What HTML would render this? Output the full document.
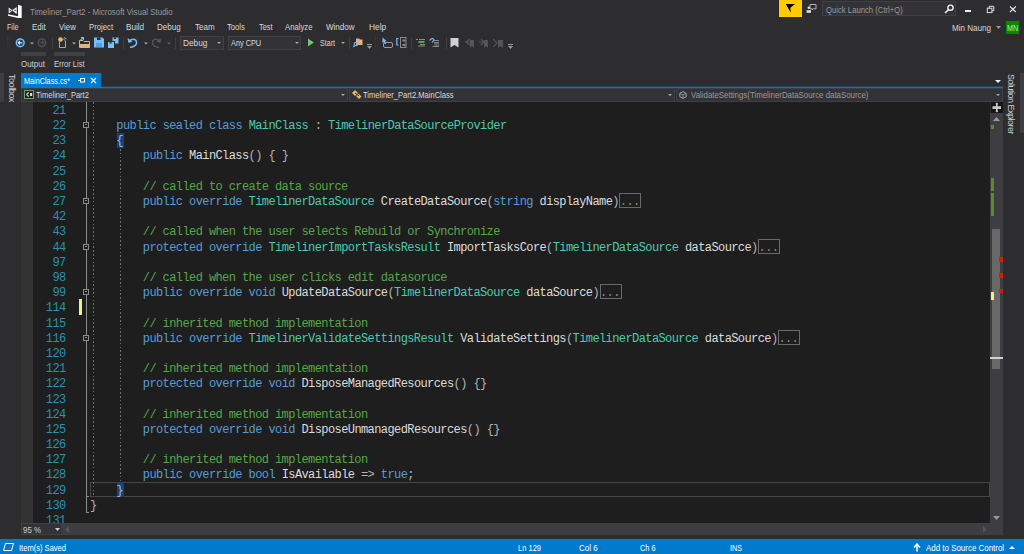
<!DOCTYPE html><html><head><meta charset='utf-8'><style>
html,body{margin:0;padding:0;}
body{width:1024px;height:554px;overflow:hidden;background:#2d2d30;position:relative;font-family:"Liberation Sans",sans-serif;}
.t{position:absolute;white-space:pre;font-family:"Liberation Sans",sans-serif;}
.c{position:absolute;white-space:pre;font-family:"Liberation Mono",monospace;font-size:12px;line-height:12px;letter-spacing:-0.59px;color:#dcdcdc;}
.k{color:#569cd6} .ty{color:#4ec9b0} .cm{color:#57a64a} .p{color:#b4b4b4}
</style></head><body>
<svg style='position:absolute;left:4px;top:2px;' width='22' height='18' viewBox='0 0 22 18'><path d='M4 12.3 L14 14.2 L14 2.8 L17.7 4 L17.7 16 L14 16 L4 13.7 Z' fill='#fff'/><path d='M4.7 5.4 L8.3 8.3 L12.7 4.9 L12.7 11.9 L8.3 8.5 L4.7 11.4 Z' fill='#fff'/><path d='M10 8.4 L11.6 7.2 L11.6 9.6 Z' fill='#2d2d30'/><path d='M5.7 7.2 L7.2 8.4 L5.7 9.6 Z' fill='#2d2d30'/></svg>
<div class='t' style='left:29.60px;top:8px;font-size:9px;line-height:9px;transform:scaleX(0.8778);transform-origin:0 0;color:#999999;'>Timeliner_Part2 - Microsoft Visual Studio</div>
<div style='position:absolute;left:779px;top:0px;width:23px;height:17px;background:#ffcc00;'></div>
<svg style='position:absolute;left:785px;top:3px;' width='12' height='11' viewBox='0 0 12 11'><path d='M0.8 1 L10 1 L5.3 4.8 L5.8 9.8 Z' fill='#000'/></svg>
<svg style='position:absolute;left:805px;top:3px;' width='12' height='11' viewBox='0 0 12 11'><path d='M5 1.5 H11 V5.8 H8.2 L7.2 6.8 V5.8 H5 Z' fill='none' stroke='#c0c0c0' stroke-width='0.9'/><circle cx='3.8' cy='4.8' r='1.3' fill='#e0e0e0'/><rect x='1.6' y='7.2' width='4.4' height='2.6' fill='#e0e0e0'/></svg>
<div style='position:absolute;left:822px;top:1px;width:134px;height:15px;background:#333337;box-sizing:border-box;border:1px solid #3f3f46;'></div>
<div class='t' style='left:826.00px;top:6px;font-size:9px;line-height:9px;transform:scaleX(0.8565);transform-origin:0 0;color:#999999;'>Quick Launch (Ctrl+Q)</div>
<svg style='position:absolute;left:944px;top:4px;' width='11' height='10' viewBox='0 0 11 10'><circle cx='6.5' cy='3.7' r='2.6' fill='none' stroke='#f1f1f1' stroke-width='1.4'/><path d='M4.6 5.6 L1 9' stroke='#f1f1f1' stroke-width='1.6'/></svg>
<div style='position:absolute;left:965px;top:10px;width:6px;height:2px;background:#f1f1f1;'></div>
<svg style='position:absolute;left:986px;top:5px;' width='10' height='10' viewBox='0 0 10 10'><rect x='1.3' y='3.2' width='4.6' height='4.4' fill='none' stroke='#e0e0e0' stroke-width='1'/><path d='M3.2 3.2 V1.3 H7.8 V5.7 H5.9' fill='none' stroke='#e0e0e0' stroke-width='1'/></svg>
<svg style='position:absolute;left:1009px;top:5px;' width='9' height='9' viewBox='0 0 9 9'><path d='M1 1.5 L6.8 7 M6.8 1.5 L1 7' stroke='#e8e8e8' stroke-width='1.1'/></svg>
<div class='t' style='left:7.00px;top:23px;font-size:9px;line-height:9px;transform:scaleX(0.7933);transform-origin:0 0;color:#dadada;'>File</div>
<div class='t' style='left:32.00px;top:23px;font-size:9px;line-height:9px;transform:scaleX(0.8746);transform-origin:0 0;color:#dadada;'>Edit</div>
<div class='t' style='left:58.60px;top:23px;font-size:9px;line-height:9px;transform:scaleX(0.8667);transform-origin:0 0;color:#dadada;'>View</div>
<div class='t' style='left:88.50px;top:23px;font-size:9px;line-height:9px;transform:scaleX(0.8593);transform-origin:0 0;color:#dadada;'>Project</div>
<div class='t' style='left:126.00px;top:23px;font-size:9px;line-height:9px;transform:scaleX(0.8997);transform-origin:0 0;color:#dadada;'>Build</div>
<div class='t' style='left:157.40px;top:23px;font-size:9px;line-height:9px;transform:scaleX(0.8900);transform-origin:0 0;color:#dadada;'>Debug</div>
<div class='t' style='left:194.60px;top:23px;font-size:9px;line-height:9px;transform:scaleX(0.8879);transform-origin:0 0;color:#dadada;'>Team</div>
<div class='t' style='left:226.80px;top:23px;font-size:9px;line-height:9px;transform:scaleX(0.8508);transform-origin:0 0;color:#dadada;'>Tools</div>
<div class='t' style='left:258.80px;top:23px;font-size:9px;line-height:9px;transform:scaleX(0.8233);transform-origin:0 0;color:#dadada;'>Test</div>
<div class='t' style='left:285.30px;top:23px;font-size:9px;line-height:9px;transform:scaleX(0.8590);transform-origin:0 0;color:#dadada;'>Analyze</div>
<div class='t' style='left:326.00px;top:23px;font-size:9px;line-height:9px;transform:scaleX(0.8920);transform-origin:0 0;color:#dadada;'>Window</div>
<div class='t' style='left:368.60px;top:23px;font-size:9px;line-height:9px;transform:scaleX(0.9295);transform-origin:0 0;color:#dadada;'>Help</div>
<div class='t' style='left:952.00px;top:24px;font-size:9px;line-height:9px;transform:scaleX(0.8962);transform-origin:0 0;color:#dadada;'>Min Naung</div>
<svg style='position:absolute;left:996px;top:26px;' width='5' height='3' viewBox='0 0 5 3'><path d='M0 0 H5 L2.5 3 Z' fill='#999'/></svg>
<div style='position:absolute;left:1006px;top:21px;width:13px;height:13px;background:#008a00;'></div>
<div class='t' style='left:1007.00px;top:24px;font-size:8.5px;line-height:8.5px;transform:scaleX(0.8409);transform-origin:0 0;color:#b8f0b8;'>MN</div>
<svg style='position:absolute;left:7px;top:37px;' width='4' height='12' viewBox='0 0 4 12'><rect x='0' y='0' width='1' height='1' fill='#3a3a3e'/><rect x='2' y='0' width='1' height='1' fill='#3a3a3e'/><rect x='0' y='2' width='1' height='1' fill='#3a3a3e'/><rect x='2' y='2' width='1' height='1' fill='#3a3a3e'/><rect x='0' y='4' width='1' height='1' fill='#3a3a3e'/><rect x='2' y='4' width='1' height='1' fill='#3a3a3e'/><rect x='0' y='6' width='1' height='1' fill='#3a3a3e'/><rect x='2' y='6' width='1' height='1' fill='#3a3a3e'/><rect x='0' y='8' width='1' height='1' fill='#3a3a3e'/><rect x='2' y='8' width='1' height='1' fill='#3a3a3e'/><rect x='0' y='10' width='1' height='1' fill='#3a3a3e'/><rect x='2' y='10' width='1' height='1' fill='#3a3a3e'/></svg>
<svg style='position:absolute;left:15px;top:37px;' width='12' height='12' viewBox='0 0 12 12'><circle cx='5.2' cy='5.8' r='3.9' fill='#1c3d5e' stroke='#75beff' stroke-width='1.5'/><path d='M7.3 5.8 H3.3 M5 4 L3.2 5.8 L5 7.6' stroke='#cfe6ff' stroke-width='1.2' fill='none'/></svg>
<svg style='position:absolute;left:30px;top:42px;' width='4' height='3' viewBox='0 0 4 3'><path d='M0 0.5 H4 L2 2.5 Z' fill='#aaa'/></svg>
<svg style='position:absolute;left:37px;top:37px;' width='12' height='12' viewBox='0 0 12 12'><circle cx='5' cy='5.8' r='3.7' fill='none' stroke='#505050' stroke-width='1.5'/><path d='M3 5.8 H6.8 M5.2 4 L7 5.8 L5.2 7.6' stroke='#505050' stroke-width='1.1' fill='none'/></svg>
<div style='position:absolute;left:52px;top:37px;width:1px;height:12px;background:#3f3f46;'></div>
<svg style='position:absolute;left:57px;top:36px;' width='12' height='13' viewBox='0 0 12 13'><circle cx='3.5' cy='3.5' r='2.3' fill='#e8b86d'/><path d='M2.5 5.5 V11.5 H8.5 V6 C8.5 4 7 3 5.5 3' fill='none' stroke='#aaa' stroke-width='1'/><path d='M7 1.5 L9.5 3' stroke='#aaa'/></svg>
<svg style='position:absolute;left:72px;top:42px;' width='4' height='3' viewBox='0 0 4 3'><path d='M0 0.5 H4 L2 2.5 Z' fill='#aaa'/></svg>
<svg style='position:absolute;left:79px;top:37px;' width='11' height='11' viewBox='0 0 11 11'><path d='M0.5 3.5 H4 L5 4.5 H10.5 V10.5 H0.5 Z' fill='none' stroke='#dcb67a'/><rect x='1' y='7' width='9' height='3' fill='#dcb67a'/><path d='M1.5 3 L4.5 0.5 M2 0.5 H4.5 V3' stroke='#75beff' stroke-width='1.1' fill='none'/></svg>
<svg style='position:absolute;left:94px;top:37px;' width='10' height='11' viewBox='0 0 10 11'><path d='M0 0.5 H8.5 L10 2 V10.5 H0 Z' fill='#75beff'/><rect x='3' y='0.5' width='3.5' height='2.5' fill='#2d2d30'/><rect x='2' y='6' width='6' height='4' fill='#5a9fd8'/></svg>
<svg style='position:absolute;left:108px;top:37px;' width='11' height='11' viewBox='0 0 11 11'><path d='M0 5 H6 V11 H0 Z' fill='#75beff'/><path d='M4.5 0.5 H10.5 V6.5 H7 V4 H4.5 Z' fill='#75beff'/><rect x='1.5' y='5' width='2' height='1.5' fill='#2d2d30'/><rect x='6' y='0.5' width='2' height='1.5' fill='#2d2d30'/></svg>
<div style='position:absolute;left:123px;top:37px;width:1px;height:12px;background:#3f3f46;'></div>
<svg style='position:absolute;left:127px;top:37px;' width='11' height='11' viewBox='0 0 11 11'><path d='M2 4.5 C4 1.5 9 1.5 9.5 5 C10 8 7 10 3 10.5' stroke='#75beff' stroke-width='1.5' fill='none'/><path d='M0.5 1 L1.5 6 L5.5 4.5 Z' fill='#75beff'/></svg>
<svg style='position:absolute;left:144px;top:42px;' width='4' height='3' viewBox='0 0 4 3'><path d='M0 0.5 H4 L2 2.5 Z' fill='#aaa'/></svg>
<svg style='position:absolute;left:151px;top:37px;' width='11' height='11' viewBox='0 0 11 11'><path d='M9 4.5 C7 1.5 2 1.5 1.5 5 C1 8 4 10 8 10.5' stroke='#555' stroke-width='1.4' fill='none'/><path d='M10.5 1 L9.5 6 L5.5 4.5 Z' fill='#555'/></svg>
<svg style='position:absolute;left:167px;top:42px;' width='4' height='3' viewBox='0 0 4 3'><path d='M0 0.5 H4 L2 2.5 Z' fill='#666'/></svg>
<div style='position:absolute;left:175px;top:37px;width:1px;height:12px;background:#3f3f46;'></div>
<div style='position:absolute;left:180px;top:36px;width:44px;height:14px;background:#333337;box-sizing:border-box;border:1px solid #3f3f46;'></div>
<div class='t' style='left:182.90px;top:39px;font-size:9px;line-height:9px;transform:scaleX(0.9183);transform-origin:0 0;color:#dadada;'>Debug</div>
<svg style='position:absolute;left:217px;top:42px;' width='4' height='3' viewBox='0 0 4 3'><path d='M0 0 H4 L2 2 Z' fill='#aaa'/></svg>
<div style='position:absolute;left:228px;top:36px;width:73px;height:14px;background:#333337;box-sizing:border-box;border:1px solid #3f3f46;'></div>
<div class='t' style='left:230.50px;top:39px;font-size:9px;line-height:9px;transform:scaleX(0.8134);transform-origin:0 0;color:#dadada;'>Any CPU</div>
<svg style='position:absolute;left:295px;top:42px;' width='4' height='3' viewBox='0 0 4 3'><path d='M0 0 H4 L2 2 Z' fill='#aaa'/></svg>
<svg style='position:absolute;left:308px;top:38px;' width='7' height='9' viewBox='0 0 7 9'><path d='M0 0.6 L5.8 4.5 L0 8.4 Z' fill='#72c472'/></svg>
<div class='t' style='left:319.60px;top:39px;font-size:9px;line-height:9px;transform:scaleX(0.7895);transform-origin:0 0;color:#dadada;'>Start</div>
<svg style='position:absolute;left:341px;top:42px;' width='4' height='3' viewBox='0 0 4 3'><path d='M0 0 H4 L2 2 Z' fill='#aaa'/></svg>
<div style='position:absolute;left:349px;top:37px;width:1px;height:12px;background:#3f3f46;'></div>
<svg style='position:absolute;left:353px;top:37px;' width='10' height='11' viewBox='0 0 10 11'><path d='M3 1.5 H6 L7 2.5 H9.5 V8 H3 Z' fill='#dcb67a'/><circle cx='3' cy='7' r='1.8' fill='none' stroke='#75beff' stroke-width='1.1'/><path d='M2 8 L0.3 10' stroke='#75beff' stroke-width='1.2'/></svg>
<svg style='position:absolute;left:367px;top:44px;' width='5' height='5' viewBox='0 0 5 5'><rect x='0' y='0' width='5' height='1' fill='#999'/><path d='M0 2 H5 L2.5 5 Z' fill='#999'/></svg>
<svg style='position:absolute;left:375px;top:37px;' width='3' height='12' viewBox='0 0 3 12'><rect x='0' y='0' width='1' height='1' fill='#3a3a3e'/><rect x='2' y='1' width='1' height='1' fill='#3a3a3e'/><rect x='0' y='2' width='1' height='1' fill='#3a3a3e'/><rect x='2' y='3' width='1' height='1' fill='#3a3a3e'/><rect x='0' y='4' width='1' height='1' fill='#3a3a3e'/><rect x='2' y='5' width='1' height='1' fill='#3a3a3e'/><rect x='0' y='6' width='1' height='1' fill='#3a3a3e'/><rect x='2' y='7' width='1' height='1' fill='#3a3a3e'/><rect x='0' y='8' width='1' height='1' fill='#3a3a3e'/><rect x='2' y='9' width='1' height='1' fill='#3a3a3e'/><rect x='0' y='10' width='1' height='1' fill='#3a3a3e'/><rect x='2' y='11' width='1' height='1' fill='#3a3a3e'/></svg>
<svg style='position:absolute;left:382px;top:37px;' width='11' height='11' viewBox='0 0 11 11'><rect x='1.5' y='5.5' width='9' height='5' rx='1.5' fill='none' stroke='#9a9a9a'/><path d='M0.5 0.5 L4.5 4 L3 4.5 L4 7 L2.8 7.3 L2 5 L0.5 6 Z' fill='#75beff'/></svg>
<svg style='position:absolute;left:396px;top:37px;' width='11' height='12' viewBox='0 0 11 12'><path d='M2.5 1.5 H0.8 V8 H2.5' stroke='#75beff' fill='none' stroke-width='1.2'/><rect x='4.5' y='0.5' width='5.5' height='10' fill='none' stroke='#8a8a8a'/><rect x='6.5' y='2.5' width='3' height='2' fill='#8a8a8a'/><rect x='6.5' y='7' width='3' height='2' fill='#8a8a8a'/></svg>
<div style='position:absolute;left:411px;top:37px;width:1px;height:12px;background:#3f3f46;'></div>
<svg style='position:absolute;left:416px;top:38px;' width='9' height='9' viewBox='0 0 9 9'><rect x='0' y='1' width='2' height='1' fill='#8a8a8a'/><rect x='3' y='1' width='6' height='1' fill='#8a8a8a'/><rect x='2.5' y='3' width='6' height='2' fill='#57a64a'/><rect x='4' y='6' width='5' height='1' fill='#8a8a8a'/><rect x='2' y='7.5' width='7' height='1' fill='#8a8a8a'/></svg>
<svg style='position:absolute;left:429px;top:37px;' width='11' height='11' viewBox='0 0 11 11'><path d='M0.8 3.5 C1.5 1 5 1 5 3 L3 5.5' stroke='#75beff' stroke-width='1.2' fill='none'/><rect x='5' y='3' width='5' height='1' fill='#8a8a8a'/><rect x='5' y='5' width='5' height='1.5' fill='#8a8a8a'/><rect x='5' y='7.5' width='5' height='1' fill='#8a8a8a'/><rect x='3.5' y='9' width='6.5' height='1' fill='#8a8a8a'/></svg>
<div style='position:absolute;left:446px;top:37px;width:1px;height:12px;background:#3f3f46;'></div>
<svg style='position:absolute;left:450px;top:38px;' width='9' height='10' viewBox='0 0 9 10'><path d='M0.5 0 H8.5 V9.5 L4.5 7 L0.5 9.5 Z' fill='#d0d0d0'/></svg>
<svg style='position:absolute;left:465px;top:38px;' width='10' height='10' viewBox='0 0 10 10'><path d='M5 1 L1 4 L5 7 M1 4 H5' stroke='#555' stroke-width='1.2' fill='none'/><path d='M5 2 H9 V10 L7 8 L5 10 Z' fill='#555'/></svg>
<svg style='position:absolute;left:479px;top:38px;' width='10' height='10' viewBox='0 0 10 10'><path d='M0 4 H4 M2 1 L5 4 L2 7' stroke='#555' stroke-width='1.2' fill='none'/><path d='M5 2 H9 V10 L7 8 L5 10 Z' fill='#555'/></svg>
<svg style='position:absolute;left:493px;top:38px;' width='11' height='10' viewBox='0 0 11 10'><path d='M0 1 L4 5 L0 9' stroke='#555' stroke-width='1.2' fill='none'/><path d='M5 2 H10 V10 L7.5 8 L5 10 Z' fill='#555'/></svg>
<svg style='position:absolute;left:508px;top:44px;' width='5' height='5' viewBox='0 0 5 5'><rect x='0' y='0' width='5' height='1' fill='#999'/><path d='M0 2 H5 L2.5 5 Z' fill='#999'/></svg>
<div style='position:absolute;left:21px;top:52px;width:25px;height:4px;background:#3f3f46;'></div>
<div style='position:absolute;left:54px;top:52px;width:31px;height:4px;background:#3f3f46;'></div>
<div class='t' style='left:21.25px;top:60px;font-size:9px;line-height:9px;transform:scaleX(0.8849);transform-origin:0 0;color:#d0d0d0;'>Output</div>
<div class='t' style='left:54.00px;top:60px;font-size:9px;line-height:9px;transform:scaleX(0.8377);transform-origin:0 0;color:#d0d0d0;'>Error List</div>
<div style='position:absolute;left:0px;top:73px;width:4px;height:29px;background:#3e3e42;'></div>
<div class='t' style='left:8px;top:74px;width:8px;height:29px;'><div style='position:absolute;left:8px;top:0;transform-origin:0 0;transform:rotate(90deg);font-size:9px;line-height:9px;color:#d0d0d0;letter-spacing:-0.45px;'>Toolbox</div></div>
<div style='position:absolute;left:1020px;top:73px;width:4px;height:60px;background:#3e3e42;'></div>
<div class='t' style='left:1007px;top:74px;width:8px;height:60px;'><div style='position:absolute;left:8px;top:0;transform-origin:0 0;transform:rotate(90deg);font-size:9px;line-height:9px;color:#d0d0d0;letter-spacing:-0.5px;'>Solution Explorer</div></div>
<div style='position:absolute;left:21px;top:86px;width:982px;height:1px;background:#1f445f;'></div>
<div style='position:absolute;left:21px;top:87px;width:982px;height:1px;background:#007acc;'></div>
<div style='position:absolute;left:21px;top:73px;width:80px;height:15px;background:#007acc;'></div>
<div class='t' style='left:24.40px;top:77px;font-size:9px;line-height:9px;transform:scaleX(0.8068);transform-origin:0 0;color:#ffffff;'>MainClass.cs*</div>
<svg style='position:absolute;left:78px;top:78px;' width='7' height='6' viewBox='0 0 7 6'><rect x='2.5' y='0.5' width='4' height='3.5' fill='none' stroke='#fff'/><path d='M0 2.5 H2.5' stroke='#fff'/></svg>
<svg style='position:absolute;left:90px;top:77px;' width='7' height='7' viewBox='0 0 7 7'><path d='M1 1 L6 6 M6 1 L1 6' stroke='#fff' stroke-width='1.1'/></svg>
<svg style='position:absolute;left:995px;top:80px;' width='6' height='3' viewBox='0 0 6 3'><path d='M0 0 H6 L3 3 Z' fill='#f1f1f1'/></svg>
<div style='position:absolute;left:21px;top:88px;width:982px;height:14px;background:#2d2d30;'></div>
<div style='position:absolute;left:21px;top:88px;width:327px;height:14px;background:#333337;box-sizing:border-box;border:1px solid #3f3f46;'></div>
<div style='position:absolute;left:349px;top:88px;width:326px;height:14px;background:#333337;box-sizing:border-box;border:1px solid #3f3f46;'></div>
<div style='position:absolute;left:676px;top:88px;width:327px;height:14px;background:#333337;box-sizing:border-box;border:1px solid #3f3f46;'></div>
<svg style='position:absolute;left:24px;top:90px;' width='10' height='9' viewBox='0 0 10 9'><rect x='0.5' y='0.5' width='9' height='8' fill='#1e1e1e' stroke='#5fae5f'/><path d='M5 3 A1.6 1.6 0 1 0 5 6' stroke='#e0e0e0' fill='none' stroke-width='1.1'/><rect x='6' y='3' width='2.2' height='3' fill='#e0e0e0'/></svg>
<div class='t' style='left:36.20px;top:91px;font-size:9px;line-height:9px;transform:scaleX(0.8372);transform-origin:0 0;color:#dadada;'>Timeliner_Part2</div>
<svg style='position:absolute;left:341px;top:94px;' width='4' height='3' viewBox='0 0 4 3'><path d='M0 0 H4 L2 2 Z' fill='#aaa'/></svg>
<svg style='position:absolute;left:352px;top:90px;' width='10' height='10' viewBox='0 0 10 10'><path d='M0 3 L3 0 L6 3 L3 6 Z' fill='#e8b86d'/><path d='M4 6 L6.5 3.5 L9.5 6.5 L7 9 Z' fill='#e8b86d'/><path d='M3 3 L7 6' stroke='#2d2d30'/></svg>
<div class='t' style='left:363.00px;top:91px;font-size:9px;line-height:9px;transform:scaleX(0.8410);transform-origin:0 0;color:#dadada;'>Timeliner_Part2.MainClass</div>
<svg style='position:absolute;left:668px;top:94px;' width='4' height='3' viewBox='0 0 4 3'><path d='M0 0 H4 L2 2 Z' fill='#aaa'/></svg>
<svg style='position:absolute;left:679px;top:91px;' width='8' height='8' viewBox='0 0 8 8'><path d='M4 0.6 L7.2 2.4 V5.6 L4 7.4 L0.8 5.6 V2.4 Z' fill='none' stroke='#9fb4cc' stroke-width='0.9'/><path d='M4 4 V7 M4 4 L1.2 2.5 M4 4 L6.8 2.5' stroke='#9fb4cc' stroke-width='0.7'/></svg>
<div class='t' style='left:691.00px;top:91px;font-size:9px;line-height:9px;transform:scaleX(0.8739);transform-origin:0 0;color:#999999;'>ValidateSettings(TimelinerDataSource dataSource)</div>
<svg style='position:absolute;left:996px;top:94px;' width='4' height='3' viewBox='0 0 4 3'><path d='M0 0 H4 L2 2 Z' fill='#aaa'/></svg>
<div style='position:absolute;left:21px;top:102px;width:12px;height:421px;background:#333333;'></div>
<div style='position:absolute;left:33px;top:102px;width:957px;height:421px;background:#1e1e1e;'></div>
<div style='position:absolute;left:90px;top:482px;width:900px;height:15px;background:transparent;box-sizing:border-box;border:1px solid #464646;'></div>
<div class='c' style='left:52.39px;top:105px;color:#2b91af'>21</div>
<div class='c' style='left:52.39px;top:120px;color:#2b91af'>22</div>
<div class='c' style='left:52.39px;top:135px;color:#2b91af'>23</div>
<div class='c' style='left:52.39px;top:150px;color:#2b91af'>24</div>
<div class='c' style='left:52.39px;top:166px;color:#2b91af'>25</div>
<div class='c' style='left:52.39px;top:181px;color:#2b91af'>26</div>
<div class='c' style='left:52.39px;top:196px;color:#2b91af'>27</div>
<div class='c' style='left:52.39px;top:211px;color:#2b91af'>42</div>
<div class='c' style='left:52.39px;top:226px;color:#2b91af'>43</div>
<div class='c' style='left:52.39px;top:242px;color:#2b91af'>44</div>
<div class='c' style='left:52.39px;top:257px;color:#2b91af'>97</div>
<div class='c' style='left:52.39px;top:272px;color:#2b91af'>98</div>
<div class='c' style='left:52.39px;top:287px;color:#2b91af'>99</div>
<div class='c' style='left:45.78px;top:302px;color:#2b91af'>114</div>
<div class='c' style='left:45.78px;top:318px;color:#2b91af'>115</div>
<div class='c' style='left:45.78px;top:333px;color:#2b91af'>116</div>
<div class='c' style='left:45.78px;top:348px;color:#2b91af'>120</div>
<div class='c' style='left:45.78px;top:363px;color:#2b91af'>121</div>
<div class='c' style='left:45.78px;top:378px;color:#2b91af'>122</div>
<div class='c' style='left:45.78px;top:394px;color:#2b91af'>123</div>
<div class='c' style='left:45.78px;top:409px;color:#2b91af'>124</div>
<div class='c' style='left:45.78px;top:424px;color:#2b91af'>125</div>
<div class='c' style='left:45.78px;top:439px;color:#2b91af'>126</div>
<div class='c' style='left:45.78px;top:454px;color:#2b91af'>127</div>
<div class='c' style='left:45.78px;top:469px;color:#2b91af'>128</div>
<div class='c' style='left:45.78px;top:485px;color:#2b91af'>129</div>
<div class='c' style='left:45.78px;top:500px;color:#2b91af'>130</div>
<div class='c' style='left:45.78px;top:515px;color:#2b91af'>131</div>
<div class='c' style='left:89.9px;top:120px'>    <span class='k'>public</span> <span class='k'>sealed</span> <span class='k'>class</span> <span class='ty'>MainClass</span> <span class='p'>:</span> <span class='ty'>TimelinerDataSourceProvider</span></div>
<div style='position:absolute;left:117px;top:133px;width:7px;height:15px;background:#0e4583;'></div>
<div class='c' style='left:89.9px;top:135px'>    <span class='p'>{</span></div>
<div class='c' style='left:89.9px;top:150px'>        <span class='k'>public</span> MainClass<span class='p'>()</span> <span class='p'>{ }</span></div>
<div class='c' style='left:89.9px;top:181px'>        <span class='cm'>// called to create data source</span></div>
<div class='c' style='left:89.9px;top:196px'>        <span class='k'>public</span> <span class='k'>override</span> <span class='ty'>TimelinerDataSource</span> CreateDataSource<span class='p'>(</span><span class='k'>string</span> displayName<span class='p'>)</span></div>
<div style='position:absolute;left:619.3px;top:193px;width:20px;height:13px;border:1px solid #6a6a6a;'></div>
<div class='c' style='left:619.8px;top:196px;color:#8a8a8a'>...</div>
<div class='c' style='left:89.9px;top:226px'>        <span class='cm'>// called when the user selects Rebuild or Synchronize</span></div>
<div class='c' style='left:89.9px;top:242px'>        <span class='k'>protected</span> <span class='k'>override</span> <span class='ty'>TimelinerImportTasksResult</span> ImportTasksCore<span class='p'>(</span><span class='ty'>TimelinerDataSource</span> dataSource<span class='p'>)</span></div>
<div style='position:absolute;left:758.1px;top:239px;width:20px;height:13px;border:1px solid #6a6a6a;'></div>
<div class='c' style='left:758.6px;top:242px;color:#8a8a8a'>...</div>
<div class='c' style='left:89.9px;top:272px'>        <span class='cm'>// called when the user clicks edit datasoruce</span></div>
<div class='c' style='left:89.9px;top:287px'>        <span class='k'>public</span> <span class='k'>override</span> <span class='k'>void</span> UpdateDataSource<span class='p'>(</span><span class='ty'>TimelinerDataSource</span> dataSource<span class='p'>)</span></div>
<div style='position:absolute;left:599.5px;top:284px;width:20px;height:13px;border:1px solid #6a6a6a;'></div>
<div class='c' style='left:600.0px;top:287px;color:#8a8a8a'>...</div>
<div class='c' style='left:89.9px;top:318px'>        <span class='cm'>// inherited method implementation</span></div>
<div class='c' style='left:89.9px;top:333px'>        <span class='k'>public</span> <span class='k'>override</span> <span class='ty'>TimelinerValidateSettingsResult</span> ValidateSettings<span class='p'>(</span><span class='ty'>TimelinerDataSource</span> dataSource<span class='p'>)</span></div>
<div style='position:absolute;left:777.9px;top:330px;width:20px;height:13px;border:1px solid #6a6a6a;'></div>
<div class='c' style='left:778.4px;top:333px;color:#8a8a8a'>...</div>
<div class='c' style='left:89.9px;top:363px'>        <span class='cm'>// inherited method implementation</span></div>
<div class='c' style='left:89.9px;top:378px'>        <span class='k'>protected</span> <span class='k'>override</span> <span class='k'>void</span> DisposeManagedResources<span class='p'>()</span> <span class='p'>{}</span></div>
<div class='c' style='left:89.9px;top:409px'>        <span class='cm'>// inherited method implementation</span></div>
<div class='c' style='left:89.9px;top:424px'>        <span class='k'>protected</span> <span class='k'>override</span> <span class='k'>void</span> DisposeUnmanagedResources<span class='p'>()</span> <span class='p'>{}</span></div>
<div class='c' style='left:89.9px;top:454px'>        <span class='cm'>// inherited method implementation</span></div>
<div class='c' style='left:89.9px;top:469px'>        <span class='k'>public</span> <span class='k'>override</span> <span class='k'>bool</span> IsAvailable <span class='p'>=></span> <span class='k'>true</span><span class='p'>;</span></div>
<div style='position:absolute;left:117px;top:482px;width:7px;height:15px;background:#0e4583;'></div>
<div class='c' style='left:89.9px;top:485px'>    <span class='p'>}</span></div>
<div class='c' style='left:89.9px;top:500px'><span class='p'>}</span></div>
<div style='position:absolute;left:86px;top:102px;width:1px;height:411px;background:#8c8c8c;'></div>
<div style='position:absolute;left:86px;top:512px;width:3px;height:1px;background:#8c8c8c;'></div>
<div style='position:absolute;left:86px;top:496px;width:3px;height:1px;background:#8c8c8c;'></div>
<div style='position:absolute;left:83px;top:122px;width:4px;height:4px;border:1px solid #8c8c8c;background:#1e1e1e'></div>
<div style='position:absolute;left:85px;top:124px;width:2px;height:1px;background:#8c8c8c;'></div>
<div style='position:absolute;left:83px;top:198px;width:4px;height:4px;border:1px solid #8c8c8c;background:#1e1e1e'></div>
<div style='position:absolute;left:85px;top:200px;width:2px;height:1px;background:#8c8c8c;'></div>
<div style='position:absolute;left:83px;top:244px;width:4px;height:4px;border:1px solid #8c8c8c;background:#1e1e1e'></div>
<div style='position:absolute;left:85px;top:246px;width:2px;height:1px;background:#8c8c8c;'></div>
<div style='position:absolute;left:83px;top:289px;width:4px;height:4px;border:1px solid #8c8c8c;background:#1e1e1e'></div>
<div style='position:absolute;left:85px;top:291px;width:2px;height:1px;background:#8c8c8c;'></div>
<div style='position:absolute;left:83px;top:335px;width:4px;height:4px;border:1px solid #8c8c8c;background:#1e1e1e'></div>
<div style='position:absolute;left:85px;top:337px;width:2px;height:1px;background:#8c8c8c;'></div>
<div style='position:absolute;left:93px;top:102px;width:0;height:394px;background:repeating-linear-gradient(#707070 0 1.6px, transparent 1.6px 3.8px);width:1px'></div>
<div style='position:absolute;left:120px;top:149px;width:0;height:332px;background:repeating-linear-gradient(#707070 0 1.6px, transparent 1.6px 3.8px);width:1px'></div>
<div style='position:absolute;left:79px;top:299px;width:3px;height:16px;background:#efef91;'></div>
<div style='position:absolute;left:991px;top:102px;width:12px;height:11px;background:#161616;'></div>
<svg style='position:absolute;left:991px;top:102px;' width='12' height='11' viewBox='0 0 12 11'><rect x='1.5' y='4.2' width='8.5' height='2.8' fill='#c8c8c8'/><rect x='5' y='1.5' width='1.6' height='8' fill='#c8c8c8'/><circle cx='5.8' cy='1.8' r='1.1' fill='#c8c8c8'/><circle cx='5.8' cy='9.2' r='1.1' fill='#c8c8c8'/></svg>
<div style='position:absolute;left:990px;top:113px;width:13px;height:422px;background:#3e3e42;'></div>
<svg style='position:absolute;left:993px;top:117px;' width='7' height='4' viewBox='0 0 7 4'><path d='M0 4 H7 L3.5 0 Z' fill='#999'/></svg>
<svg style='position:absolute;left:993px;top:516px;' width='7' height='4' viewBox='0 0 7 4'><path d='M0 0 H7 L3.5 4 Z' fill='#999'/></svg>
<div style='position:absolute;left:991px;top:125px;width:3px;height:4px;background:#5b8a2a;'></div>
<div style='position:absolute;left:991px;top:178px;width:3px;height:13px;background:#5b8a2a;'></div>
<div style='position:absolute;left:991px;top:193px;width:3px;height:23px;background:#5b8a2a;'></div>
<div style='position:absolute;left:992px;top:229px;width:8px;height:140px;background:#686868;'></div>
<div style='position:absolute;left:999px;top:257px;width:4px;height:5px;background:#e51400;'></div>
<div style='position:absolute;left:999px;top:273px;width:4px;height:5px;background:#e51400;'></div>
<div style='position:absolute;left:999px;top:289px;width:4px;height:4px;background:#e51400;'></div>
<div style='position:absolute;left:991px;top:292px;width:3px;height:8px;background:#efef91;'></div>
<div style='position:absolute;left:990px;top:357px;width:13px;height:2px;background:#d0d0d0;'></div>
<div style='position:absolute;left:21px;top:523px;width:969px;height:12px;background:#3e3e42;'></div>
<div style='position:absolute;left:21px;top:523px;width:41px;height:12px;background:#333337;box-sizing:border-box;border:1px solid #3f3f46;'></div>
<div class='t' style='left:23.00px;top:526px;font-size:9px;line-height:9px;transform:scaleX(0.8776);transform-origin:0 0;color:#d0d0d0;'>95 %</div>
<svg style='position:absolute;left:55px;top:528px;' width='5' height='3' viewBox='0 0 5 3'><path d='M0 0 H5 L2.5 3 Z' fill='#d0d0d0'/></svg>
<svg style='position:absolute;left:65px;top:526px;' width='4' height='7' viewBox='0 0 4 7'><path d='M4 0 V7 L0 3.5 Z' fill='#555'/></svg>
<svg style='position:absolute;left:983px;top:526px;' width='4' height='7' viewBox='0 0 4 7'><path d='M0 0 V7 L4 3.5 Z' fill='#555'/></svg>
<div style='position:absolute;left:0px;top:539px;width:1024px;height:15px;background:#007acc;'></div>
<svg style='position:absolute;left:3px;top:543px;' width='11' height='8' viewBox='0 0 11 8'><path d='M2.5 0.5 H10.5 L8.5 7.5 H0.5 Z' fill='none' stroke='#fff' stroke-width='1'/></svg>
<div class='t' style='left:19.00px;top:544px;font-size:9px;line-height:9px;transform:scaleX(0.8391);transform-origin:0 0;color:#ffffff;'>Item(s) Saved</div>
<div class='t' style='left:518.00px;top:544px;font-size:9px;line-height:9px;transform:scaleX(0.8357);transform-origin:0 0;color:#ffffff;'>Ln 129</div>
<div class='t' style='left:578.75px;top:544px;font-size:9px;line-height:9px;transform:scaleX(0.8926);transform-origin:0 0;color:#ffffff;'>Col 6</div>
<div class='t' style='left:639.50px;top:544px;font-size:9px;line-height:9px;transform:scaleX(0.8156);transform-origin:0 0;color:#ffffff;'>Ch 6</div>
<div class='t' style='left:730.00px;top:544px;font-size:9px;line-height:9px;transform:scaleX(0.8000);transform-origin:0 0;color:#ffffff;'>INS</div>
<svg style='position:absolute;left:913px;top:543px;' width='8' height='9' viewBox='0 0 8 9'><path d='M4 8.5 V1.5 M1 4.5 L4 1 L7 4.5' stroke='#fff' stroke-width='1.5' fill='none'/></svg>
<div class='t' style='left:926.40px;top:544px;font-size:9px;line-height:9px;transform:scaleX(0.8820);transform-origin:0 0;color:#ffffff;'>Add to Source Control</div>
<svg style='position:absolute;left:1009px;top:546px;' width='6' height='3' viewBox='0 0 6 3'><path d='M0 3 H6 L3 0 Z' fill='#fff'/></svg>
</body></html>
